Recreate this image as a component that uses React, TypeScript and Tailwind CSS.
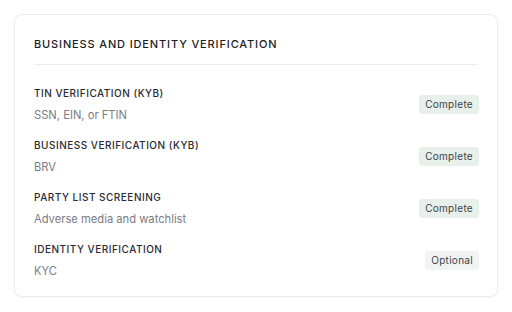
import React from "react";

const rows = [
  { title: "TIN VERIFICATION (KYB)", sub: "SSN, EIN, or FTIN", status: "Complete" },
  { title: "BUSINESS VERIFICATION (KYB)", sub: "BRV", status: "Complete" },
  { title: "PARTY LIST SCREENING", sub: "Adverse media and watchlist", status: "Complete" },
  { title: "IDENTITY VERIFICATION", sub: "KYC", status: "Optional" },
];

export default function App() {
  return (
    <div className="w-[512px] h-[312px] bg-white p-[14px]" style={{ fontFamily: "Inter, 'Noto Sans', sans-serif" }}>
      <div className="border border-[#ebebeb] rounded-[8px] bg-white pl-[19px] pr-[18px] pt-[21px] pb-[17px] shadow-[0_1px_2px_rgba(0,0,0,0.03)]">
        <div className="text-[11px] leading-[16px] font-medium tracking-[0.078em] text-[#1c1c22]">
          BUSINESS AND IDENTITY VERIFICATION
        </div>
        <div className="h-px bg-[#ececec] mt-3 mr-px" />
        <div className="flex flex-col gap-[15px] mt-[21px]">
          {rows.map((r) => (
            <div key={r.title} className="flex items-center justify-between">
              <div className="flex flex-col gap-[7px]">
                <div className="text-[10px] leading-[14px] font-medium tracking-[0.05em] text-[#2a2a33]">{r.title}</div>
                <div className="text-[11.2px] leading-[16px] text-[#7b7b85]">{r.sub}</div>
              </div>
              <div
                className={
                  "text-[10px] leading-[19px] h-[19px] px-[6px] rounded-[3px] text-[#3f3f49] tracking-[0.03em] " +
                  (r.status === "Complete" ? "bg-[#e7f0ea]" : "bg-[#f2f3f3]")
                }
              >
                {r.status}
              </div>
            </div>
          ))}
        </div>
      </div>
    </div>
  );
}
